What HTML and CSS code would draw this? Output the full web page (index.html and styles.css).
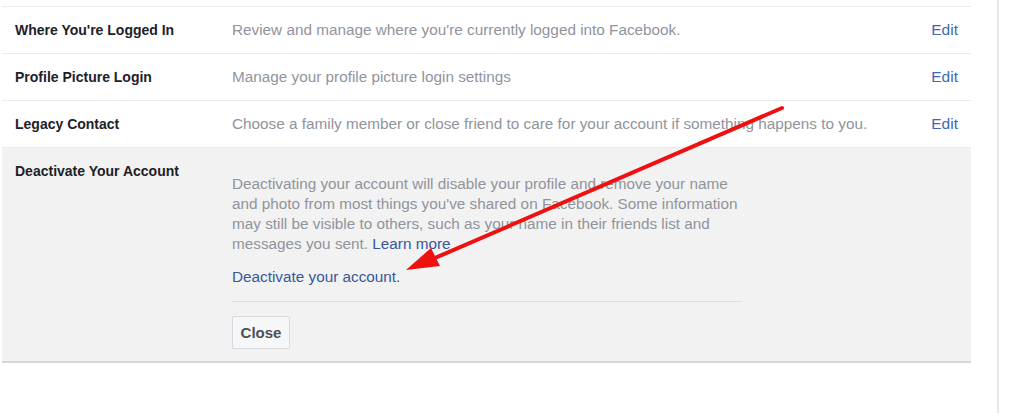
FILE: index.html
```html
<!DOCTYPE html>
<html>
<head>
<meta charset="utf-8">
<link rel="stylesheet" href="styles.css">
</head>
<body>
<div class="page">
  <div class="panel">
    <div class="row">
      <div class="label">Where You're Logged In</div>
      <div class="desc">Review and manage where you're currently logged into Facebook.</div>
      <a class="edit">Edit</a>
    </div>
    <div class="row">
      <div class="label">Profile Picture Login</div>
      <div class="desc">Manage your profile picture login settings</div>
      <a class="edit">Edit</a>
    </div>
    <div class="row">
      <div class="label">Legacy Contact</div>
      <div class="desc">Choose a family member or close friend to care for your account if something happens to you.</div>
      <a class="edit">Edit</a>
    </div>
    <div class="row expanded">
      <div class="label">Deactivate Your Account</div>
      <div class="body">
        <p class="info">Deactivating your account will disable your profile and remove your name and photo from most things you've shared on Facebook. Some information may still be visible to others, such as your name in their friends list and messages you sent. <a class="link">Learn more</a></p>
        <a class="link deact">Deactivate your account.</a>
        <div class="rule"></div>
        <button class="close">Close</button>
      </div>
    </div>
  </div>
  <div class="sideline"></div>
</div>
<svg class="arrow" width="1024" height="416" viewBox="0 0 1024 416">
  <line x1="782" y1="108" x2="428" y2="261" stroke="#ee1111" stroke-width="4" stroke-linecap="round"/>
  <polygon points="406,270 440,266 431,248" fill="#ee1111"/>
</svg>
</body>
</html>
```
FILE: styles.css
```css
html, body {
  margin: 0;
  padding: 0;
  background: #ffffff;
}
body {
  font-family: "Liberation Sans", Arial, Helvetica, sans-serif;
  font-size: 14px;
  line-height: 18px;
  color: #1d2129;
  position: relative;
  width: 1024px;
  height: 416px;
  overflow: hidden;
}
.page {
  display: flex;
  align-items: flex-start;
  padding-left: 2px;
}
.panel {
  width: 969px;
  margin-top: 6px;
  border-top: 1px solid #e9ebee;
}
.row {
  display: flex;
  align-items: flex-start;
  padding: 14px 13px 14px 13px;
  border-bottom: 1px solid #e9ebee;
}
.label {
  width: 217px;
  flex: none;
  font-weight: bold;
}
.desc {
  flex: 1;
  color: #90949c;
  font-size: 15.3px;
}
.edit {
  flex: none;
  color: #4267b2;
  font-size: 15.5px;
  cursor: pointer;
}
.expanded {
  background: #f2f2f2;
  border-bottom: 2px solid #d6d6d6;
  padding-bottom: 12px;
}
.body {
  width: 510px;
  padding-top: 12px;
  display: flex;
  flex-direction: column;
  align-items: flex-start;
}
.info {
  margin: 0;
  width: 512px;
  line-height: 20px;
  font-size: 15.3px;
  color: #90949c;
}
.link {
  color: #385898;
  cursor: pointer;
}
.deact {
  margin-top: 13px;
  line-height: 20px;
  font-size: 15.3px;
}
.rule {
  align-self: stretch;
  height: 1px;
  background: #dadde1;
  margin-top: 14px;
}
.close {
  margin-top: 14px;
  width: 58px;
  height: 33px;
  padding: 0;
  background: #f6f7f9;
  border: 1px solid #d6d9dd;
  border-radius: 2px;
  font-family: "Liberation Sans", Arial, Helvetica, sans-serif;
  font-size: 15px;
  font-weight: bold;
  color: #4b4f56;
}
.sideline {
  margin-left: 26px;
  width: 2px;
  height: 413px;
  background: #e6e6e6;
}
.arrow {
  position: absolute;
  left: 0;
  top: 0;
  pointer-events: none;
}
```
